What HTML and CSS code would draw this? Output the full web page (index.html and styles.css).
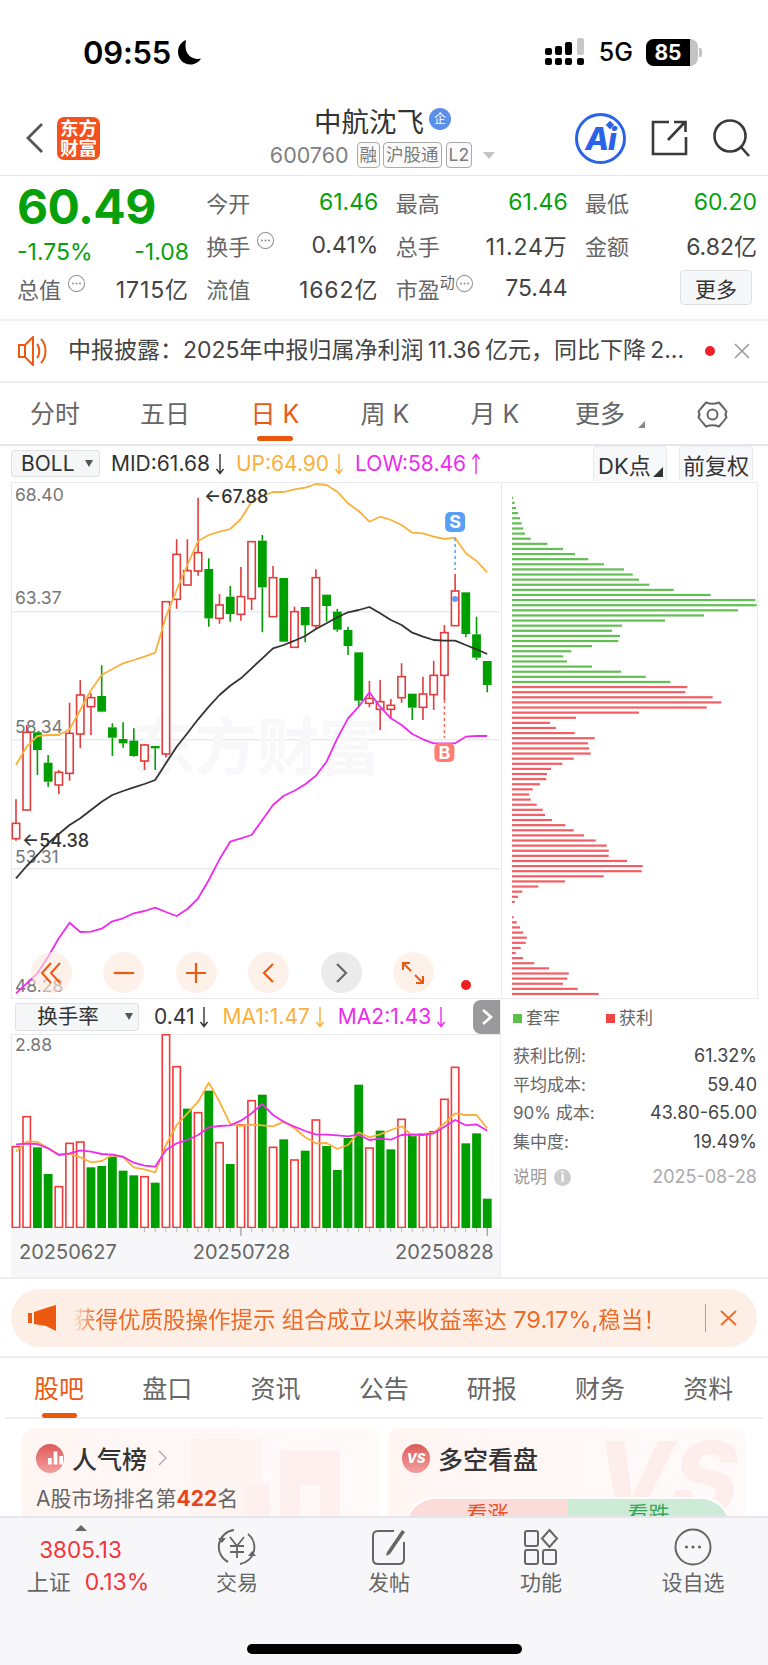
FILE: index.html
```html
<!DOCTYPE html>
<html lang="zh">
<head>
<meta charset="utf-8">
<title>中航沈飞</title>
<link rel="stylesheet" href="styles.css">
</head>
<body>
<svg class="defs" width="0" height="0" aria-hidden="true">
  <symbol id="dn" viewBox="0 0 10 22"><path d="M5 1V20M1.5 16L5 20.5L8.5 16" fill="none" stroke="currentColor" stroke-width="1.4"/></symbol>
  <symbol id="up" viewBox="0 0 10 22"><path d="M5 21V2M1.5 6L5 1.5L8.5 6" fill="none" stroke="currentColor" stroke-width="1.4"/></symbol>
  <symbol id="more" viewBox="0 0 20 20"><circle cx="10" cy="10" r="8.5" fill="none" stroke="#9a9a9a" stroke-width="1.2"/><circle cx="6.3" cy="10" r="1" fill="#8a8a8a"/><circle cx="10" cy="10" r="1" fill="#8a8a8a"/><circle cx="13.7" cy="10" r="1" fill="#8a8a8a"/></symbol>
</svg>
<div class="page">
  <div class="status">
    <span class="time">09:55</span>
    <svg class="moon" width="25" height="26" viewBox="0 0 25 26"><path d="M9 1C4 3 1 7.500 1 13c0 7 5.500 12.500 12.500 12.500 4.500 0 8.500-2.500 10.500-6-1 .3-2 .4-3 .4-7 0-12.500-5.500-12.500-12.500C8.500 5 8.600 3 9 1z" fill="#000"/></svg>
    <span class="status-gap"></span>
    <svg class="signal" width="42" height="28" viewBox="0 0 42 28"><g fill="#000"><rect x="1" y="10" width="7" height="7" rx="2"/><rect x="1" y="20" width="7" height="7" rx="2"/><rect x="11" y="8" width="7" height="9" rx="2"/><rect x="11" y="20" width="7" height="7" rx="2"/><rect x="21" y="4" width="7" height="13" rx="2"/><rect x="21" y="20" width="7" height="7" rx="2"/><rect x="33" y="20" width="7" height="7" rx="2"/></g><rect x="33" y="0" width="7" height="17" rx="2" fill="#c8c8c8"/></svg>
    <span class="net">5G</span>
    <span class="batt"><span class="batt-fill">85</span><span class="batt-rest"></span></span><span class="batt-nub"></span>
  </div>

  <header class="head">
    <svg class="back" width="20" height="32" viewBox="0 0 20 32"><path d="M17 2L3 16L17 30" fill="none" stroke="#555" stroke-width="2.800"/></svg>
    <div class="logo"><span>东方</span><span>财富</span></div>
    <div class="head-mid">
      <div class="title"><span>中航沈飞</span><span class="qi">企</span></div>
      <div class="code"><span class="code-no">600760</span><span class="tag">融</span><span class="tag">沪股通</span><span class="tag tag-l">L2</span><i class="code-tri"></i></div>
    </div>
    <div class="ai"><span>Ai</span><i></i></div>
    <svg class="ic-share" width="38" height="38" viewBox="0 0 38 38"><path d="M19 3H3V35H36V18M18 21L35 3M24 3H35.500V13" fill="none" stroke="#3a3a3a" stroke-width="2.600"/></svg>
    <svg class="ic-search" width="38" height="38" viewBox="0 0 38 38"><circle cx="18" cy="17" r="15.500" fill="none" stroke="#3a3a3a" stroke-width="2.600"/><path d="M29 28L37 37" stroke="#3a3a3a" stroke-width="2.600"/></svg>
  </header>

  <section class="quote">
    <div class="price">60.49</div>
    <div class="stat"><span class="k">今开</span><span class="v g">61.46</span></div>
    <div class="stat"><span class="k">最高</span><span class="v g">61.46</span></div>
    <div class="stat"><span class="k">最低</span><span class="v g">60.20</span></div>
    <div class="stat stat-ch"><span class="v g">-1.75%</span><span class="v g">-1.08</span></div>
    <div class="stat"><span class="k">换手<svg class="m"><use href="#more"/></svg></span><span class="v">0.41%</span></div>
    <div class="stat"><span class="k">总手</span><span class="v wide">11.24万</span></div>
    <div class="stat"><span class="k">金额</span><span class="v">6.82亿</span></div>
    <div class="stat"><span class="k">总值<svg class="m"><use href="#more"/></svg></span><span class="v wide">1715亿</span></div>
    <div class="stat"><span class="k">流值</span><span class="v wide">1662亿</span></div>
    <div class="stat"><span class="k">市盈<sup>动</sup><svg class="m m-t"><use href="#more"/></svg></span><span class="v">75.44</span></div>
    <div class="stat stat-btn"><button class="more-btn">更多</button></div>
  </section>

  <section class="notice">
    <svg width="32" height="30" viewBox="0 0 32 30"><path d="M1 9H7L15 1V29L7 21H1zM7 9V21" fill="none" stroke="#ec5a12" stroke-width="2"/><path d="M19 8C22 11 22 19 19 22M23 3C29 9 29 21 23 27" fill="none" stroke="#ec5a12" stroke-width="2"/></svg>
    <p class="notice-text">中报披露：2025年中报归属净利润&#8201;11.36&#8201;亿元，同比下降&#8201;2...</p>
    <i class="notice-dot"></i>
    <svg class="notice-x" width="16" height="16" viewBox="0 0 16 16"><path d="M1 1L15 15M15 1L1 15" stroke="#9a9a9a" stroke-width="1.600"/></svg>
  </section>

  <nav class="ktabs">
    <span>分时</span><span>五日</span><span class="on">日 K</span><span>周 K</span><span>月 K</span>
    <span class="kmore">更多<i></i></span>
    <span class="gear"><svg width="31" height="31" viewBox="0 0 31 31"><path d="M9 3.500Q15.500 6 22 3.500Q26 8 29.500 12.500Q27.500 15.500 29.500 18.500Q26 23 22 27.500Q15.500 25 9 27.500Q5 23 1.500 18.500Q3.500 15.500 1.500 12.500Q5 8 9 3.500Z" fill="none" stroke="#666" stroke-width="2" stroke-linejoin="round"/><circle cx="15.500" cy="15.500" r="5" fill="none" stroke="#666" stroke-width="2"/></svg></span>
  </nav>

  <div class="indi">
    <button class="sel sel-boll">BOLL<i></i></button>
    <span class="lg c-k">MID:61.68<svg class="a"><use href="#dn"/></svg></span>
    <span class="lg c-o">UP:64.90<svg class="a"><use href="#dn"/></svg></span>
    <span class="lg c-m">LOW:58.46<svg class="a"><use href="#up"/></svg></span>
    <button class="tb tb-dk">DK点<i></i></button>
    <button class="tb tb-fq">前复权</button>
  </div>

  <section class="charts">
    <div class="col-l">
      <div class="main-wrap">
        <svg id="main" class="chart" width="489" height="518" viewBox="11 481 489 518"></svg>
        <div class="tools">
          <span class="tool"><svg width="24" height="24" viewBox="0 0 24 24"><path d="M11 2L2 12L11 22M20 2L11 12L20 22" fill="none" stroke="#ec5a12" stroke-width="2"/></svg></span>
          <span class="tool"><svg width="24" height="24" viewBox="0 0 24 24"><path d="M2 12H22" stroke="#ec5a12" stroke-width="2.200"/></svg></span>
          <span class="tool"><svg width="24" height="24" viewBox="0 0 24 24"><path d="M2 12H22M12 2V22" stroke="#ec5a12" stroke-width="2.200"/></svg></span>
          <span class="tool"><svg width="24" height="24" viewBox="0 0 24 24"><path d="M16 3L7 12L16 21" fill="none" stroke="#ec5a12" stroke-width="2.200"/></svg></span>
          <span class="tool tool-off"><svg width="24" height="24" viewBox="0 0 24 24"><path d="M8 3L17 12L8 21" fill="none" stroke="#666" stroke-width="2.200"/></svg></span>
          <span class="tool"><svg width="24" height="24" viewBox="0 0 24 24"><path d="M2 9V2H9M2 2L10 10M22 15V22H15M22 22L14 14" fill="none" stroke="#ec5a12" stroke-width="2"/></svg></span>
          <i class="tool-dot"></i>
        </div>
      </div>
      <div class="vhead">
        <button class="sel sel-vol">换手率<i></i></button>
        <span class="lg c-k2">0.41<svg class="a"><use href="#dn"/></svg></span>
        <span class="lg c-o">MA1:1.47<svg class="a"><use href="#dn"/></svg></span>
        <span class="lg c-m">MA2:1.43<svg class="a"><use href="#dn"/></svg></span>
        <span class="fold"><svg width="12" height="18" viewBox="0 0 12 18"><path d="M2 2L10 9L2 16" fill="none" stroke="#fff" stroke-width="2.600"/></svg></span>
      </div>
      <svg id="vol" class="chart" width="489" height="194" viewBox="11 1034 489 194"></svg>
      <div class="axis">
        <svg id="ticks" class="ticks" width="489" height="9" viewBox="11 1228 489 9"></svg>
        <div class="dates"><span>20250627</span><span>20250728</span><span>20250828</span></div>
      </div>
    </div>
    <div class="col-r">
      <svg id="chip" class="chip" width="258" height="518" viewBox="500 481 258 518"></svg>
      <div class="panel">
        <div class="legend"><span><i class="sq sq-g"></i>套牢</span><span><i class="sq sq-r"></i>获利</span></div>
        <div class="row"><span>获利比例:</span><b>61.32%</b></div>
        <div class="row"><span>平均成本:</span><b>59.40</b></div>
        <div class="row"><span>90% 成本:</span><b>43.80-65.00</b></div>
        <div class="row"><span>集中度:</span><b>19.49%</b></div>
        <div class="row row-n"><span>说明<i class="info">i</i></span><em>2025-08-28</em></div>
      </div>
    </div>
  </section>

  <section class="promo-wrap">
    <div class="promo">
      <svg width="30" height="26" viewBox="0 0 30 26"><path d="M0 8H4V18H0zM6 7L18 3L28 0V26L18 21L6 19z" fill="#ec5a12"/></svg>
      <p class="promo-text">获得优质股操作提示 组合成立以来收益率达 <span>79.17%,</span>稳当！</p>
      <i class="promo-sep"></i>
      <svg width="17" height="16" viewBox="0 0 17 16"><path d="M1 1L16 15M16 1L1 15" stroke="#ee6a25" stroke-width="1.800"/></svg>
    </div>
  </section>

  <nav class="ftabs">
    <span class="on">股吧</span><span>盘口</span><span>资讯</span><span>公告</span><span>研报</span><span>财务</span><span>资料</span>
  </nav>

  <section class="cards">
    <article class="card">
      <svg class="card-deco" width="358" height="100" viewBox="0 0 358 100"><g fill="#fdf0ee"><rect x="168" y="0" width="72" height="100" opacity=".5"/><rect x="258" y="12" width="60" height="88"/><rect x="223" y="47" width="25" height="53"/><path d="M278 47h20v53h-20z" fill="#fff8f7"/></g></svg>
      <div class="card-h">
        <span class="badge">
          <svg width="18" height="16" viewBox="0 0 18 16"><path d="M1 15V8H5V15ZM7 15V1H11V15ZM13 15V6H17V15Z" fill="#fff"/></svg>
        </span>
        <b>人气榜</b>
        <svg width="9" height="16" viewBox="0 0 9 16"><path d="M1 1L8 8L1 15" fill="none" stroke="#aaa" stroke-width="1.400"/></svg>
      </div>
      <p class="rank">A股市场排名第<strong>422</strong>名</p>
    </article>
    <article class="card">
      <span class="vs-deco">VS</span>
      <div class="card-h card-h2">
        <span class="badge"><i>VS</i></span>
        <b>多空看盘</b>
      </div>
      <div class="vote"><span class="vote-up">看涨</span><span class="vote-dn">看跌</span></div>
    </article>
  </section>

  <footer class="dock">
    <div class="dock-row">
      <div class="idx">
        <i class="idx-tri"></i>
        <span class="idx-v">3805.13</span>
        <span class="idx-l"><em>上证</em><span>0.13%</span></span>
      </div>
      <div class="dk">
        <svg width="42" height="38" viewBox="0 0 42 38"><path d="M18 2A17 17 0 0 0 12 34M24 36A17 17 0 0 0 32 6" fill="none" stroke="#666" stroke-width="2"/><path d="M14 9L21 18L28 9M21 18V30M14 18H28M14 24H28" fill="none" stroke="#666" stroke-width="1.800"/><path d="M2 10L6 15L10 10ZM32 28L36 23L40 28Z" fill="#666"/></svg>
        <span>交易</span>
      </div>
      <div class="dk">
        <svg width="38" height="38" viewBox="0 0 38 38"><path d="M24 3H8Q3 3 3 8V31Q3 36 8 36H29Q34 36 34 31V14" fill="none" stroke="#666" stroke-width="2"/><path d="M17 24L32 2L35 4L20 26L16 28Z" fill="#666"/></svg>
        <span>发帖</span>
      </div>
      <div class="dk">
        <svg width="36" height="38" viewBox="0 0 36 38"><g fill="none" stroke="#666" stroke-width="2"><rect x="2" y="3" width="13" height="15" rx="2"/><rect x="2" y="22" width="13" height="14" rx="2"/><rect x="20" y="22" width="13" height="14" rx="2"/><path d="M26.500 2L34 10.500L26.500 19L19 10.500Z"/></g></svg>
        <span>功能</span>
      </div>
      <div class="dk">
        <svg width="38" height="38" viewBox="0 0 38 38"><circle cx="19" cy="19" r="17.500" fill="none" stroke="#666" stroke-width="2"/><circle cx="12.500" cy="19" r="1.600" fill="#666"/><circle cx="19" cy="19" r="1.600" fill="#666"/><circle cx="25.500" cy="19" r="1.600" fill="#666"/></svg>
        <span>设自选</span>
      </div>
    </div>
    <i class="home"></i>
  </footer>
</div>
<script src="chart.js"></script>
</body>
</html>
```
FILE: styles.css
```css
* { box-sizing: border-box; }
html, body { margin: 0; padding: 0; background: #fff; }
body { width: 768px; height: 1665px; overflow: hidden; font-family: Inter, "Noto Sans CJK SC", "Noto Sans", sans-serif; color: #333; }
p { margin: 0; }
i, em { font-style: normal; }
button { font: inherit; padding: 0; }
.defs { position: absolute; }
.page { position: relative; width: 768px; height: 1665px; overflow: hidden; display: flex; flex-direction: column; }

/* status bar */
.status { height: 104px; flex: none; display: flex; align-items: center; padding: 0 66px 0 83px; }
.time { font-size: 31px; font-weight: 600; color: #000; letter-spacing: -.2px; }
.moon { margin-left: 6px; }
.status-gap { flex: 1; }
.signal { margin-right: 2px; }
.net { font-size: 25px; font-weight: 500; color: #000; margin-left: 11px; }
.batt { margin-left: 13px; width: 52px; height: 27px; border-radius: 8px; overflow: hidden; display: flex; background: #c4c4c4; }
.batt-fill { width: 44px; background: #000; color: #fff; font-size: 21px; font-weight: 700; text-align: center; line-height: 27px; }
.batt-nub { width: 3px; height: 9px; background: #c4c4c4; border-radius: 0 2px 2px 0; margin-left: 1px; }

/* header */
.head { height: 72px; flex: none; display: flex; align-items: center; border-bottom: 1px solid #e6e6e8; padding: 0 18px 3px 25px; }
.logo { margin-left: 12px; width: 43px; height: 43px; border-radius: 7px; background: #f4511e; color: #fff; font-size: 18.500px; font-weight: 700; line-height: 20px; display: flex; flex-direction: column; align-items: center; justify-content: center; }
.head-mid { flex: 1; padding-left: 90px; display: flex; flex-direction: column; align-items: center; margin-top: -3px; }
.title { display: flex; align-items: center; font-size: 27.500px; line-height: 36px; color: #333; font-weight: 400; }
.qi { margin-left: 5px; margin-top: -6px; width: 22px; height: 22px; border-radius: 50%; background: #5b8fe8; color: #fff; font-size: 12px; line-height: 22px; text-align: center; }
.code { display: flex; align-items: center; margin-top: 1px; height: 28px; }
.code-no { font-size: 21.500px; color: #808080; margin-right: 8px; }
.tag { border: 1px solid #aaa; border-radius: 4px; font-size: 17.500px; color: #7a7a7a; height: 26px; line-height: 24px; padding: 0 2px; margin-right: 3px; background: #fafafa; }
.tag-l { font-size: 17.500px; padding: 0 2px; margin-left: 1px; }
.code-tri { margin-left: 8px; width: 0; height: 0; border: 6px solid transparent; border-top: 7px solid #c4c4c4; border-bottom: 0; }
.ai { position: relative; width: 51px; height: 51px; flex: none; border-radius: 50%; border: 3px solid #2a62e8; color: #2a62e8; font-size: 31px; font-weight: 800; font-style: italic; text-align: center; line-height: 45px; letter-spacing: -1px; }
.ai i { position: absolute; right: 10px; top: 6px; width: 6px; height: 6px; background: #2a62e8; transform: rotate(45deg); }
.ic-share { margin-left: 24px; }
.ic-search { margin-left: 24px; }

/* quote */
.quote { height: 145px; flex: none; display: grid; grid-template-columns: repeat(4, 172px); grid-template-rows: repeat(3, 43px); column-gap: 17.330px; padding: 4px 0 0 17px; border-bottom: 2px solid #f0f0f2; }
.price { font-size: 48px; font-weight: 700; color: #07a00b; line-height: 43px; letter-spacing: -.6px; margin-top: 5px; }
.stat { display: flex; justify-content: space-between; align-items: center; font-size: 23px; white-space: nowrap; }
.k { color: #666; display: flex; align-items: center; font-size: 22px; }
.k sup { font-size: 15px; line-height: 1; align-self: flex-start; margin-top: 3px; color: #666; }
.v { color: #444; }
.v.g { color: #07a00b; }
.v.wide { letter-spacing: .9px; }
.stat-ch { padding-top: 15px; }
.m { width: 19px; height: 19px; margin-left: 6px; align-self: flex-start; margin-top: 2px; }
.m-t { margin-left: 0; }
.stat-btn { justify-content: flex-end; padding: 0 5px 0 0; }
.more-btn { width: 72px; height: 35px; border: 1px solid #dfe0e4; background: #f6f7f9; border-radius: 4px; color: #333; font-size: 21px; }

/* notice */
.notice { height: 62px; flex: none; display: flex; align-items: center; padding: 0 18px; border-bottom: 2px solid #eeeef0; }
.notice-text { margin-left: 18px; font-size: 23px; color: #444; white-space: nowrap; width: 638px; line-height: 30px; margin-top: -2px; overflow: hidden; }
.notice-dot { width: 10px; height: 10px; border-radius: 50%; background: #f0202a; }
.notice-x { margin-left: 19px; }

/* k tabs */
.ktabs { height: 63px; flex: none; display: grid; grid-template-columns: repeat(7, 110px); align-items: center; border-bottom: 2px solid #e6e6ea; }
.ktabs span { text-align: center; font-size: 25px; color: #666; position: relative; line-height: 62px; }
.ktabs .on { color: #ec5a12; }
.ktabs .on::after { content: ""; position: absolute; left: 37px; bottom: 4px; width: 36px; height: 5px; border-radius: 3px; background: #e8590c; }
.kmore { padding-right: 10px; }
.kmore i { position: absolute; right: 15px; top: 38px; width: 0; height: 0; border-style: solid; border-width: 0 0 7px 7px; border-color: transparent transparent #888 transparent; }
.gear { display: flex; justify-content: center; align-items: center; padding-right: 6px; }

/* indicator rows */
.indi { height: 35px; flex: none; display: flex; align-items: center; padding-left: 11px; }
.sel { position: relative; height: 27px; border: 1px solid #e0e1e5; background: #f5f6f8; border-radius: 3px; color: #333; text-align: left; }
.sel i { position: absolute; width: 0; height: 0; border-style: solid; border-width: 7px 4.500px 0; border-color: #555 transparent transparent; top: 9px; }
.sel-boll { width: 89px; font-size: 21px; padding-left: 9px; line-height: 25px; }
.sel-boll i { right: 6px; }
.lg { font-size: 21px; display: inline-flex; align-items: center; white-space: nowrap; }
.lg .a { width: 10px; height: 22px; margin-left: 5px; }
.indi .lg { margin-left: 11px; }
.c-k { color: #333; }
.c-k2 { color: #333; }
.c-o { color: #fbb03b; }
.c-m { color: #ee2bee; }
.tb { height: 35px; border: 1px solid #eaeaee; border-bottom: 0; background: #f7f8fa; border-radius: 4px 4px 0 0; font-size: 22px; color: #333; position: relative; }
.tb-dk { width: 74px; margin-left: auto; text-align: left; padding-left: 4px; }
.tb-dk i { position: absolute; right: 3px; bottom: 4px; width: 0; height: 0; border-style: solid; border-width: 0 0 10px 10px; border-color: transparent transparent #333 transparent; }
.tb-fq { width: 74px; margin-left: 12px; margin-right: 15px; }

/* charts */
.charts { height: 798px; flex: none; display: flex; border-bottom: 2px solid #eeeef0; }
.col-l { width: 489px; margin-left: 11px; display: flex; flex-direction: column; }
.chart { display: block; flex: none; }
.main-wrap { position: relative; height: 518px; }
.tools { position: absolute; left: 0; right: 0; top: 471px; display: flex; padding-left: 20px; gap: 31.400px; }
.tool { width: 41px; height: 41px; border-radius: 50%; background: rgba(253, 232, 221, .62); display: flex; align-items: center; justify-content: center; flex: none; }
.tool-off { background: #ebebeb; }
.tool-dot { position: absolute; left: 450px; top: 28px; width: 10px; height: 10px; border-radius: 50%; background: #f02020; }
.vhead { height: 35px; flex: none; display: flex; align-items: center; padding-left: 4px; position: relative; }
.sel-vol { width: 124px; height: 28px; font-size: 20.500px; text-align: center; padding-right: 18px; margin-right: 15px; line-height: 26px; }
.sel-vol i { right: 5px; top: 9px; }
.vhead .lg { margin-right: 13px; }
.fold { position: absolute; right: 0; top: 1px; width: 27px; height: 34px; border-radius: 8px 0 0 8px; background: #9a9a9a; display: flex; align-items: center; justify-content: center; }
.axis { height: 49px; flex: none; background: #f7f7f9; position: relative; }
.ticks { display: block; }
.dates { display: flex; padding: 3px 0 0 8px; font-size: 20px; color: #666; line-height: 24px; }
.dates span + span { margin-left: 76px; }
.dates span:last-child { margin-left: 105px; }
.col-r { width: 268px; display: flex; flex-direction: column; }
.chip { display: block; flex: none; }
.panel { flex: 1; border-left: 1px solid #eeeef0; padding: 5px 11px 0 12px; font-size: 17px; }
.legend { display: flex; gap: 46px; color: #666; line-height: 28px; margin-bottom: 10px; }
.legend span { display: inline-flex; align-items: center; }
.sq { width: 9px; height: 9px; margin-right: 4px; }
.sq-g { background: #5cbf4a; }
.sq-r { background: #f04545; }
.row { display: flex; justify-content: space-between; line-height: 28.500px; color: #666; }
.row b { font-weight: 400; color: #444; font-size: 18px; }
.row-n { margin-top: 7px; color: #999; }
.row-n span { display: flex; align-items: center; }
.row-n em { color: #aaa; font-size: 18px; }
.info { width: 17px; height: 17px; border-radius: 50%; background: #ccc; color: #fff; font-size: 13px; line-height: 17px; text-align: center; margin-left: 7px; font-weight: 700; }

/* promo */
.promo-wrap { height: 79px; flex: none; padding: 10px 11px 0; border-bottom: 2px solid #eeeef0; }
.promo { height: 58px; border-radius: 29px; background: #fdeee6; display: flex; align-items: center; padding-left: 17px; }
.promo-text { margin-left: 15px; width: 632px; font-size: 22.500px; color: #ee6a25; white-space: nowrap; -webkit-mask-image: linear-gradient(90deg, transparent, #000 22px); mask-image: linear-gradient(90deg, transparent, #000 22px); }
.promo-text span { font-size: 23.500px; letter-spacing: .1px; }
.promo-sep { width: 1px; height: 28px; background: #ec8a55; margin-right: 14px; }

/* f10 tabs */
.ftabs { height: 61px; flex: none; margin: 0 5px; display: grid; grid-template-columns: repeat(7, 108.200px); border-bottom: 2px solid #f0f0f2; }
.ftabs span { text-align: center; font-size: 25px; color: #666; line-height: 62px; position: relative; }
.ftabs .on { color: #ec5a12; }
.ftabs .on::after { content: ""; position: absolute; left: 37px; bottom: 2px; width: 35px; height: 5px; border-radius: 3px; background: #e8590c; }

/* cards */
.cards { flex: none; display: flex; gap: 8px; padding: 9px 22px 0; }
.card { position: relative; width: 358px; height: 130px; border-radius: 12px 12px 0 0; background: linear-gradient(90deg, #fff6f4, #fffafa); overflow: hidden; padding: 11px 14px 0; }
.card-deco { position: absolute; left: 0; top: 10px; }
.card-h { position: relative; display: flex; align-items: center; height: 38px; }
.card-h b { font-weight: 500; font-size: 25px; color: #333; margin-left: 8px; }
.card-h svg:last-child { margin-left: 11px; }
.badge { width: 28px; height: 29px; border-radius: 50%; background: linear-gradient(180deg, #dd5a5a, #f3a09e); display: flex; align-items: center; justify-content: center; color: #fff; font-size: 13px; font-weight: 800; }
.badge i { font-style: italic; }
.rank { position: relative; margin-top: 6px; font-size: 21px; color: #666; line-height: 32px; }
.rank strong { color: #e8451c; font-weight: 700; }
.vs-deco { position: absolute; right: 8px; top: 0; font-size: 100px; font-weight: 800; font-style: italic; color: #fdeeec; line-height: 1; }
.vote { position: absolute; left: 17px; top: 69px; width: 326px; height: 60px; display: flex; font-size: 21px; line-height: 30px; border: 2px solid #fff; border-radius: 30px 30px 0 0; overflow: hidden; }
.vote span { flex: 1; text-align: center; }
.vote-up { background: #fbdcd8; color: #e8512c; }
.vote-dn { background: #cdebd6; color: #3aa65a; }

/* dock */
.dock { position: absolute; left: 0; right: 0; bottom: 0; height: 149px; background: #f7f7fa; border-top: 2px solid #e6e6ea; display: flex; flex-direction: column; align-items: center; }
.dock-row { width: 768px; display: grid; grid-template-columns: 161px repeat(4, 152px); height: 113px; }
.idx { display: flex; flex-direction: column; align-items: center; padding-top: 7px; }
.idx-tri { width: 0; height: 0; border-style: solid; border-width: 0 6px 6px; border-color: transparent transparent #666; }
.idx-v { font-size: 22.500px; color: #f5343c; line-height: 24px; margin-top: 7px; }
.idx-l { display: flex; gap: 14px; align-items: center; line-height: 30px; margin: 5px 0 0 15px; font-size: 23px; color: #f5343c; }
.idx-l em { color: #666; font-size: 22px; }
.dk { display: flex; flex-direction: column; align-items: center; padding-top: 10px; font-size: 21px; color: #666; }
.dk span { margin-top: 2px; line-height: 30px; }
.home { width: 275px; height: 10px; border-radius: 5px; background: #000; margin-top: 13px; }
```
FILE: chart.js
```js
(function () {
  var NS = 'http://www.w3.org/2000/svg';
  function el(parent, name, attrs, text) {
    var n = document.createElementNS(NS, name);
    for (var k in attrs) n.setAttribute(k, attrs[k]);
    if (text) n.textContent = text;
    parent.appendChild(n);
    return n;
  }
  function X(i) { return 16 + 10.71 * i; }
  function line(svg, zs, conv, color, w) {
    var d = zs.map(function (z, i) { return (i ? 'L' : 'M') + X(i).toFixed(1) + ' ' + conv(z).toFixed(1); }).join('');
    el(svg, 'path', { d: d, fill: 'none', stroke: color, 'stroke-width': w || 1.8, 'stroke-linejoin': 'round' });
  }
  var RED = '#e23c3c', GREEN = '#009f00';

  /* main K chart: [red?, high, top, bottom, low], in 3x crop units from y=480 */
  var C = [
    [1,958,1030,1076,1082],[1,735,757,990,990],[0,757,757,810,885],[0,825,848,905,920],[1,870,877,915,943],
    [1,668,760,880,902],[1,600,645,762,805],[1,640,653,680,765],[0,556,648,695,697],[0,730,742,773,828],
    [0,727,777,790,803],[0,745,782,828,830],[1,793,795,843,870],[0,798,798,805,870],[1,365,365,822,832],
    [1,178,223,358,386],[1,178,272,315,315],[1,53,218,273,287],[0,235,267,415,440],[1,342,375,415,431],
    [0,318,350,402,425],[1,261,350,403,422],[1,185,185,356,390],[0,165,182,322,457],[1,258,293,410,410],
    [0,294,294,485,485],[1,380,395,502,502],[0,381,381,436,487],[1,268,293,437,448],[0,344,344,378,425],
    [0,387,395,449,455],[0,440,450,498,525],[0,517,517,662,680],[1,603,655,670,682],[1,600,665,688,750],
    [1,657,676,688,716],[1,550,590,653,668],[0,641,641,683,720],[1,590,642,682,720],[1,542,586,644,690],
    [1,435,458,586,660],[1,282,333,437,437],[0,337,337,462,472],[0,410,463,533,540],[0,543,543,615,637]
  ];
  var UP = [855,800,768,765,765,748,690,630,585,567,550,540,530,518,410,330,255,183,165,155,147,117,65,48,36,36,28,23,12,15,35,70,93,125,110,120,135,158,160,170,177,173,220,243,277];
  var MID = [1195,1158,1125,1090,1062,1035,1015,990,965,945,933,922,912,900,850,800,760,718,680,645,617,595,565,535,505,495,482,468,447,430,412,397,390,381,400,420,435,458,470,480,482,482,495,508,522];
  var LOW = [1540,1510,1480,1430,1375,1328,1356,1355,1346,1324,1315,1300,1293,1283,1296,1308,1287,1255,1200,1138,1085,1075,1065,1020,975,947,932,913,887,845,775,715,680,637,680,715,735,762,778,790,790,790,770,768,768];
  var yM = function (z) { return 480 + z / 3; };
  var main = document.getElementById('main');
  el(main, 'rect', { x: 11.5, y: 482.5, width: 489, height: 516, fill: '#fff', stroke: '#e8e8ee', 'stroke-width': 1 });
  [611, 739, 868].forEach(function (y) { el(main, 'rect', { x: 11, y: y, width: 489, height: 1.5, fill: '#e8ebf2' }); });
  el(main, 'text', { x: 133, y: 770, 'font-size': 62, 'font-weight': 700, fill: '#f8f8fa' }, '东方财富');
  [[495, '68.40'], [598, '63.37'], [727, '58.34'], [857, '53.31'], [986, '48.28']].forEach(function (t) {
    el(main, 'text', { x: 15, y: t[0] + 6, 'font-size': 17.5, fill: '#777' }, t[1]);
  });
  C.forEach(function (c, i) {
    var x = X(i), col = c[0] ? RED : GREEN;
    el(main, 'path', { d: 'M' + x + ' ' + yM(c[1]) + 'V' + yM(c[2]) + 'M' + x + ' ' + yM(c[3]) + 'V' + yM(c[4]), stroke: col, 'stroke-width': 1.6 });
    if (c[0]) el(main, 'rect', { x: x - 3.7, y: yM(c[2]), width: 7.4, height: yM(c[3]) - yM(c[2]), fill: '#fff', stroke: col, 'stroke-width': 1.6 });
    else el(main, 'rect', { x: x - 4.4, y: yM(c[2]), width: 8.8, height: yM(c[3]) - yM(c[2]), fill: col });
  });
  line(main, UP, yM, '#fbb03b');
  line(main, MID, yM, '#333');
  line(main, LOW, yM, '#ee2bee');
  el(main, 'text', { x: 204, y: 503, 'font-size': 18, 'font-weight': 500, fill: '#333' }, '←67.88');
  el(main, 'text', { x: 22, y: 847, 'font-size': 18, 'font-weight': 500, fill: '#333' }, '←54.38');
  var sx = X(41), bx = X(40);
  el(main, 'path', { d: 'M' + sx + ' 538V570', stroke: '#5b9ef5', 'stroke-width': 1.5, 'stroke-dasharray': '3 3' });
  el(main, 'circle', { cx: sx, cy: 599, r: 3, fill: '#5b9ef5' });
  el(main, 'rect', { x: sx - 10, y: 512, width: 20, height: 20, rx: 5, fill: '#5b9ef5' });
  el(main, 'text', { x: sx, y: 528, 'font-size': 18, 'font-weight': 700, fill: '#fff', 'text-anchor': 'middle' }, 'S');
  el(main, 'path', { d: 'M' + bx + ' 700V738', stroke: '#ff6a60', 'stroke-width': 1.5, 'stroke-dasharray': '3 3' });
  el(main, 'rect', { x: bx - 10, y: 743, width: 20, height: 19, rx: 5, fill: '#ff7d73' });
  el(main, 'text', { x: bx, y: 758.5, 'font-size': 18, 'font-weight': 700, fill: '#fff', 'text-anchor': 'middle' }, 'B');

  /* turnover chart */
  var V = [[1,440],[1,350],[0,442],[0,522],[1,560],[1,430],[1,426],[0,502],[0,498],[0,470],[0,512],[0,526],[1,530],[0,548],[1,104],[1,200],[0,326],[1,338],[0,272],[1,428],[0,492],[1,375],[1,302],[0,284],[1,442],[0,418],[1,480],[0,452],[1,360],[0,438],[0,510],[0,414],[0,254],[1,444],[0,392],[0,448],[1,358],[0,405],[1,402],[1,395],[1,298],[1,202],[0,430],[0,400],[0,596]];
  var M1 = [455,425,425,445,463,462,472,487,483,465,472,502,508,517,435,375,340,305,248,305,372,378,374,376,379,365,385,412,430,429,447,435,397,412,403,390,379,407,402,398,370,340,345,345,385];
  var M2 = [433,431,432,445,465,460,451,455,462,464,470,488,497,500,450,430,420,405,382,378,376,362,340,312,345,365,380,393,403,404,406,409,404,420,416,419,405,403,405,400,380,360,376,373,392];
  var yV = function (z) { return 1000 + z / 3; };
  var vol = document.getElementById('vol');
  el(vol, 'path', { d: 'M11.5 1228V1034.500H500', fill: 'none', stroke: '#e8e8ee' });
  el(vol, 'text', { x: 15, y: 1051, 'font-size': 17.5, fill: '#777' }, '2.88');
  V.forEach(function (b, i) {
    var x = X(i), t = yV(b[1]);
    if (b[0]) el(vol, 'rect', { x: x - 3.7, y: t, width: 7.4, height: 1228.5 - t - 1, fill: '#fff', stroke: '#f53a3a', 'stroke-width': 1.6 });
    else el(vol, 'rect', { x: x - 4.4, y: t, width: 8.8, height: 1228 - t, fill: GREEN });
  });
  line(vol, M1, yV, '#fbb03b');
  line(vol, M2, yV, '#ee2bee');

  var ticks = document.getElementById('ticks');
  for (var i = 12; i < 45; i++) {
    var long = i === 21 || i === 44;
    el(ticks, 'path', { d: 'M' + X(i) + ' 1228V' + (long ? 1236 : 1232), stroke: long ? '#888' : '#bbb', 'stroke-width': 1 });
  }

  /* chip distribution: right ends in 3x crop units from x=490 */
  var G = [69,74,78,84,90,95,100,105,122,172,219,255,295,342,402,428,447,478,551,662,796,800,744,642,525,396,366,390,385,306,244,219,231,306,393,467,541];
  var R = [592,586,668,694,650,447,258,180,198,254,314,294,298,302,251,217,183,171,169,150,128,117,122,140,158,165,186,226,251,282,317,350,356,356,411,458,455,341,225,145,97,84,74,0,0,71,80,90,100,110,107,92,77,99,133,177,236,232,219,263,326];
  var chip = document.getElementById('chip');
  el(chip, 'rect', { x: 501.5, y: 482.5, width: 256, height: 516, fill: '#fff', stroke: '#e8e8ee' });
  function bars(list, start, fill) {
    list.forEach(function (e, k) {
      if (!e) return;
      el(chip, 'rect', { x: 512, y: (start + k * 5.115 - 1.1).toFixed(2), width: ((e - 66) / 3).toFixed(1), height: 2.2, fill: fill });
    });
  }
  bars(G, 497.8, '#62bf52');
  bars(R, 497.8 + 37 * 5.115, '#f25e64');
})();
```
